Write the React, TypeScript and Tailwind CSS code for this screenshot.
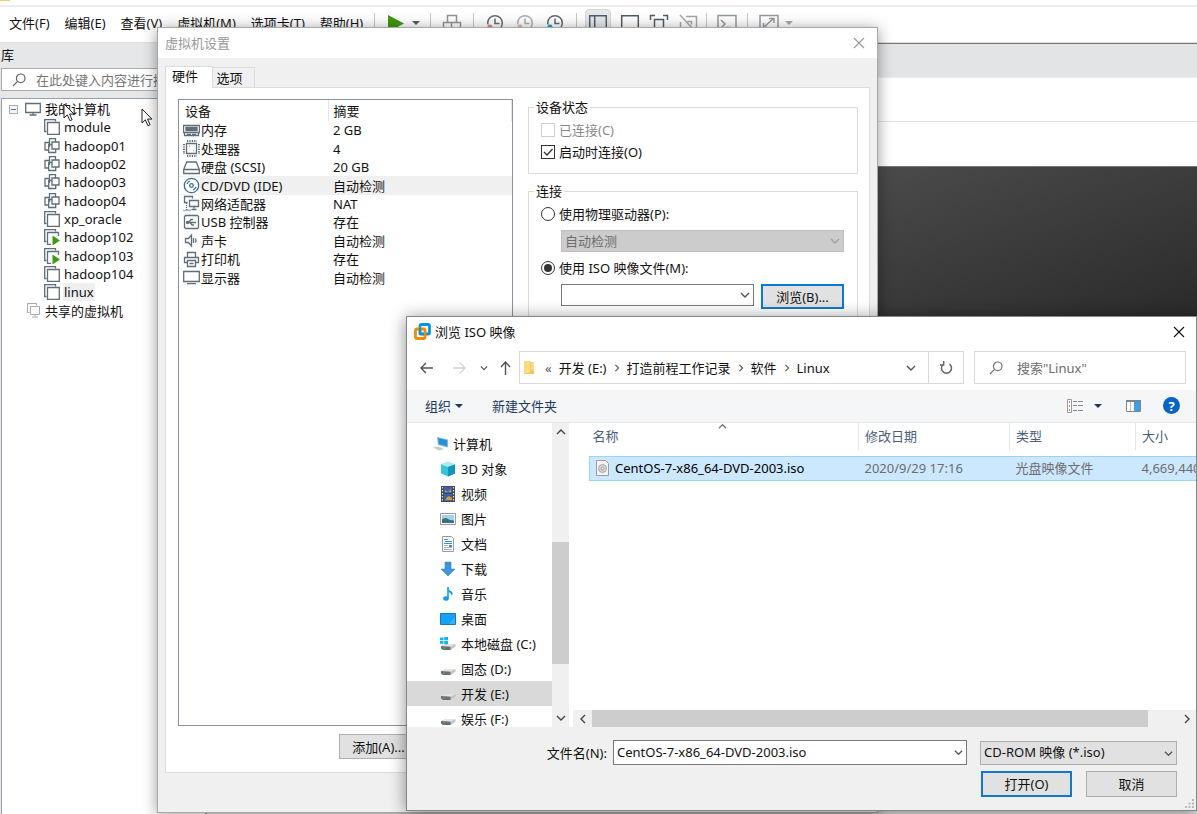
import { useState } from 'react';
import type { ReactNode } from 'react';

const menus = ['文件(F)', '编辑(E)', '查看(V)', '虚拟机(M)', '选项卡(T)', '帮助(H)'];

const machines = [
  { name: 'module', icon: 'single' },
  { name: 'hadoop01', icon: 'clone' },
  { name: 'hadoop02', icon: 'clone' },
  { name: 'hadoop03', icon: 'clone' },
  { name: 'hadoop04', icon: 'clone' },
  { name: 'xp_oracle', icon: 'single' },
  { name: 'hadoop102', icon: 'running' },
  { name: 'hadoop103', icon: 'running' },
  { name: 'hadoop104', icon: 'single' },
  { name: 'linux', icon: 'single' },
];

const devices = [
  { name: '内存', summary: '2 GB', icon: 'memory' },
  { name: '处理器', summary: '4', icon: 'cpu' },
  { name: '硬盘 (SCSI)', summary: '20 GB', icon: 'disk' },
  { name: 'CD/DVD (IDE)', summary: '自动检测', icon: 'cd' },
  { name: '网络适配器', summary: 'NAT', icon: 'network' },
  { name: 'USB 控制器', summary: '存在', icon: 'usb' },
  { name: '声卡', summary: '自动检测', icon: 'sound' },
  { name: '打印机', summary: '存在', icon: 'printer' },
  { name: '显示器', summary: '自动检测', icon: 'display' },
];

const places = [
  { name: '3D 对象', icon: 'cube' },
  { name: '视频', icon: 'video' },
  { name: '图片', icon: 'picture' },
  { name: '文档', icon: 'document' },
  { name: '下载', icon: 'download' },
  { name: '音乐', icon: 'music' },
  { name: '桌面', icon: 'desktop' },
  { name: '本地磁盘 (C:)', icon: 'system' },
  { name: '固态 (D:)', icon: 'drive' },
  { name: '开发 (E:)', icon: 'drive' },
  { name: '娱乐 (F:)', icon: 'drive' },
];

const crumbs = ['开发 (E:)', '打造前程工作记录', '软件', 'Linux'];

function Chevron({ dir = 'down', size = 10, className = '' }: { dir?: string; size?: number; className?: string }) {
  const d: Record<string, string> = {
    down: 'M1 3l4 4 4-4',
    up: 'M1 7l4-4 4 4',
    left: 'M7 1L3 5l4 4',
    right: 'M3 1l4 4-4 4',
  };
  return (
    <svg width={size} height={size} viewBox="0 0 10 10" fill="none" stroke="currentColor" strokeWidth="1.4" className={`shrink-0 ${className}`}>
      <path d={d[dir]} />
    </svg>
  );
}

function Caret({ className = '' }: { className?: string }) {
  return (
    <svg width="8" height="4" viewBox="0 0 8 4" className={`shrink-0 ${className}`} fill="currentColor">
      <path d="M0 0h8L4 4z" />
    </svg>
  );
}

function Lens({ className = '' }: { className?: string }) {
  return (
    <svg width="14" height="14" viewBox="0 0 14 14" fill="none" stroke="currentColor" strokeWidth="1.2" className={`shrink-0 ${className}`}>
      <circle cx="8.7" cy="5.3" r="4.3" />
      <path d="M5.6 8.4L1 13" />
    </svg>
  );
}

function Cross({ className = '' }: { className?: string }) {
  return (
    <svg width="12" height="12" viewBox="0 0 12 12" fill="none" stroke="currentColor" strokeWidth="1.1" className={className}>
      <path d="M1 1l10 10M11 1L1 11" />
    </svg>
  );
}

function Cursor({ className = '' }: { className?: string }) {
  return (
    <svg width="13" height="19" viewBox="0 0 13 19" className={className}>
      <path d="M1 1v14l3.3-3.1 2.6 5.8 2.2-1-2.5-5.6H11z" fill="#fff" stroke="#222" />
    </svg>
  );
}

function MachineIcon({ type }: { type: string }) {
  return (
    <svg width="16" height="16" viewBox="0 0 16 16" fill="none" stroke="#5f6e78" strokeWidth="1.3" className="shrink-0">
      {type === 'clone' ? (
        <>
          <path d="M5.5 4.5H1v7.500h3.500" />
          <path d="M5.5 9V.7h6V4" />
          <path d="M8 6.500H4.700v8h7V11" />
          <path d="M8 4h7v7H8z" />
        </>
      ) : (
        <>
          <path d="M2.500 12.500H.7V.7h10.800v1.800" />
          {type === 'single' ? <path d="M3.500 3.500h11.800v11.800H3.500z" /> : <path d="M7 15.300H3.500V3.500h11V7" />}
          {type === 'running' && <path d="M8.500 6.500l7.500 5-7.500 5z" fill="#3f9c12" stroke="none" />}
        </>
      )}
    </svg>
  );
}

const deviceDrawings: Record<string, ReactNode> = {
  memory: (
    <>
      <path d="M.5 3.500h16v7H.5zM1.500 10.500v3h14v-3" />
      <path d="M3 5.500h3v3H3zM7 5.500h3v3H7zM11 5.500h3v3h-3z" fill="#5f6e78" />
      <path d="M4 12.500h4M9 12.500h4" />
    </>
  ),
  cpu: (
    <>
      <path d="M3.500 3.500h10v10h-10z" />
      <path d="M6 6h.5M10.500 10.500h.5" strokeWidth="1.500" />
      <path d="M4 1h10M4 16h10M1 4v10M16 4v10" strokeDasharray="1.200 1.200" strokeWidth="2" />
    </>
  ),
  disk: <path d="M.7 10.500l3-7.500h9.600l3 7.500v4H.7zM.7 10.500h15.600" />,
  cd: (
    <>
      <circle cx="8.500" cy="8.500" r="7.200" stroke="#3d6f96" />
      <circle cx="8.500" cy="8.500" r="1.800" stroke="#3d6f96" />
      <path d="M4 7A5 5 0 0 1 7 4M13 10A5 5 0 0 1 10 13" stroke="#3d6f96" />
    </>
  ),
  network: (
    <>
      <path d="M4.500 7.500h-3v-6h8v2M6.500 5.500h9v6h-9zM11 11.500v2M8.500 14.500h5" />
      <path d="M3.500 8v7H8M.5 15.500h8" strokeDasharray="1 1" />
    </>
  ),
  usb: (
    <>
      <path d="M2.500 1.500h12l1 1v11l-1 1h-12l-1-1v-11z" />
      <path d="M4 8.500h9M6 8l2-2.500h2M7 8.500l2 2.500h2" />
      <circle cx="4.500" cy="8.500" r="1" fill="#5f6e78" />
    </>
  ),
  sound: <path d="M2.500 6.500h3l3-3.500v11l-3-3.500h-3zM10.500 6v5M12.500 6.500q1 2 0 4" />,
  printer: (
    <>
      <path d="M4.500 6.500v-5h8v5M4.500 11.500h-3v-5h14v5h-3" />
      <path d="M4.500 9.500h8v6h-8zM6.500 12.500h4" />
    </>
  ),
  display: <path d="M.7 2.500h15.600v10H.7zM4 14.700h9" />,
};

function DeviceIcon({ type }: { type: string }) {
  return (
    <svg width="17" height="17" viewBox="0 0 17 17" fill="none" stroke="#5f6e78" strokeWidth="1.3" className="shrink-0">
      {deviceDrawings[type]}
    </svg>
  );
}

const driveBody = (
  <>
    <path d="M1 10l5-2h9.500v2.500L10.500 14H3l-2-1.500z" fill="#c3c3c3" />
    <path d="M1 10l5-2h9.500l-5 2.800z" fill="#e4e4e4" />
    <path d="M1 10l9.500.8V14H3l-2-1.500z" fill="#6b706f" />
    <path d="M3 12h2" stroke="#46c34c" />
  </>
);

const placeDrawings: Record<string, ReactNode> = {
  computer: (
    <>
      <path d="M4 1l11 2.500v8L5 9z" fill="#8fb9d4" />
      <path d="M5 2l9 2.200v6L6 8.300z" fill="#2193dc" />
      <path d="M0 11.500l5-1 6 2.500-5 1.500z" fill="#c8ccd0" />
    </>
  ),
  cube: (
    <>
      <path d="M8 1l7 2.500v9L8 15.500l-7-3v-9z" fill="#37c3dc" />
      <path d="M8 1l7 2.500L8 6 1 3.500z" fill="#a5ebf3" />
      <path d="M8 6l7-2.500v9L8 15.500z" fill="#1496b8" />
    </>
  ),
  video: (
    <>
      <path d="M1 0h14v16H1z" fill="#46474a" />
      <path d="M4 1h8v6H4z" fill="#3764b8" />
      <path d="M4 8h8v7H4z" fill="#3b62ac" />
      <path d="M5 4l3 2 3-3v3H5zM6 12l3-2 3 2v2H6z" fill="#d39b3a" />
      <path d="M2.500 1v15M13.500 1v15" stroke="#ddd" strokeDasharray="1.500 1.500" strokeWidth="1.200" />
    </>
  ),
  picture: (
    <>
      <path d="M.5 2.500h15v11H.5z" fill="#fff" stroke="#9a9a9a" />
      <path d="M2 4h12v8H2z" fill="#9fd2f4" />
      <path d="M2 8l4-1 4 2 4 .5V12H2z" fill="#3d7162" />
      <path d="M2 10.500h12V12H2z" fill="#386da0" />
    </>
  ),
  document: (
    <>
      <path d="M2.500.5h9l2 2v13h-11z" fill="#fff" stroke="#9b9b9b" />
      <path d="M4 3.500h4M5 5.500h7M4 7.500h8" stroke="#3b94d8" />
      <path d="M4 9.500h4M4 11.500h8M4 13.500h8" stroke="#9bb4c8" />
      <path d="M9 9h3v2H9z" fill="#4c85aa" />
    </>
  ),
  download: <path d="M5 1h6v7h4l-7 7-7-7h4z" fill="#3e95dd" stroke="#2a79bd" strokeWidth=".5" />,
  music: (
    <>
      <path d="M8 1v11" stroke="#109bf0" strokeWidth="1.600" />
      <path d="M8.500 1q0 3 3 4.500 2 1.500.3 4.500 0-2.500-3.300-4z" fill="#109bf0" />
      <ellipse cx="6" cy="12.500" rx="2.800" ry="2.200" fill="#109bf0" />
    </>
  ),
  desktop: (
    <>
      <path d="M.5 2.500h15v11H.5z" fill="#16a0f8" stroke="#2175b4" />
      <path d="M9 13l6-7v7z" fill="#3bb2fc" />
    </>
  ),
  system: (
    <>
      {driveBody}
      <path d="M0 1.500h3.500v2.700H0zM4.200 1H8v3.200H4.200zM0 5h3.500v2.700H0zM4.200 5H8v3.200H4.200z" fill="#12b5ee" />
    </>
  ),
  drive: driveBody,
};

function PlaceIcon({ type }: { type: string }) {
  return (
    <svg width="16" height="16" viewBox="0 0 16 16" fill="none" className="shrink-0">
      {placeDrawings[type]}
    </svg>
  );
}

function Divider() {
  return <div className="h-5 w-px bg-[#c4c8cb]" />;
}

function ToolButton({ label, active, children }: { label: string; active?: boolean; children: ReactNode }) {
  return (
    <button
      aria-label={label}
      className={`flex h-7 items-center justify-center ${active ? 'w-[26px] rounded border border-[#d4d8da] bg-[#e4e8ea]' : ''}`}
    >
      <svg width={active ? 18 : 20} height="18" viewBox={active ? '1 0 18 18' : '0 0 20 18'} fill="none" stroke="#4f5d69" strokeWidth="1.500">
        {children}
      </svg>
    </button>
  );
}

function Clock({ label, color, dot }: { label: string; color: string; dot: string }) {
  return (
    <ToolButton label={label}>
      <g stroke={color}>
        <circle cx="10" cy="9" r="7.300" />
        <path d="M10 4.500v5h4.500" />
      </g>
      <path d="M2 10.500h5v5H2z" fill="#fff" stroke="none" />
      <circle cx="5" cy="13" r="2.500" fill={dot} stroke="none" />
    </ToolButton>
  );
}

function MenuBar() {
  return (
    <div className="flex h-[37px] items-center border-t-2 border-[#ededed] pb-[3px] pl-[9px]">
      <nav className="flex gap-[15px] pr-[11px]">
        {menus.map((menu) => (
          <button key={menu} className="whitespace-nowrap">
            {menu}
          </button>
        ))}
      </nav>
      <Divider />
      <div className="flex items-center gap-[7px] px-[10px]">
        <ToolButton label="启动">
          <path d="M3 1l16 8.500L3 18z" fill="#429812" stroke="none" />
        </ToolButton>
        <Caret className="text-[#4f5d69]" />
      </div>
      <Divider />
      <div className="flex px-[11px]">
        <ToolButton label="发送">
          <g stroke="#8d959b">
            <path d="M5.500 1.500h9v7h-9zM1.500 8.500h8v6h-8zM9.500 8.500h9v6h-9z" />
          </g>
        </ToolButton>
      </div>
      <Divider />
      <div className="flex gap-[10px] px-[11px]">
        <Clock label="拍摄快照" color="#5f6c76" dot="#e8896d" />
        <Clock label="恢复快照" color="#a9afb3" dot="#f0b49c" />
        <Clock label="管理快照" color="#5f6c76" dot="#18a2c0" />
      </div>
      <Divider />
      <div className="flex gap-[9px] px-2">
        <ToolButton label="显示库" active>
          <path d="M1.700 1.700h16.600v16H1.700zM6.700 2v16" />
        </ToolButton>
        <ToolButton label="缩略图栏">
          <path d="M1.700 1.700h16.600v12H1.700zM2 13.700h16" />
        </ToolButton>
        <ToolButton label="全屏">
          <path d="M1.500 6V1.500H6M14 1.500h4.500V6M5.500 5.500h9v12h-9zM1.500 14v3" />
        </ToolButton>
        <ToolButton label="Unity">
          <g stroke="#a2a8ac">
            <path d="M8 2.500h10.500v13H14M2.500 8v7.500H12M2 1l13 14M9.500 7.500h4v3" />
          </g>
        </ToolButton>
      </div>
      <Divider />
      <div className="flex px-[10px]">
        <ToolButton label="控制台">
          <g stroke="#9299a0">
            <path d="M1 1.500h18v15H1zM4 6l4 4-4 4M9 13.500h5" />
          </g>
        </ToolButton>
      </div>
      <Divider />
      <div className="flex items-center gap-[6px] px-[11px]">
        <ToolButton label="自由拉伸">
          <g stroke="#9299a0">
            <path d="M1 1.500h18v15H1zM5 13l9-8M10 4.500h5V9M4.500 9v4.500H9" />
          </g>
        </ToolButton>
        <Caret className="text-[#a2a8ac]" />
      </div>
    </div>
  );
}

function Library() {
  return (
    <aside className="flex w-[206px] shrink-0 flex-col bg-[#e6e7e9] pl-px">
      <h2 className="h-[25px] leading-6">库</h2>
      <label className="flex h-[23px] items-center border border-[#a9adb3] bg-white pl-[10px]">
        <Lens className="text-[#666]" />
        <input
          aria-label="搜索"
          placeholder="在此处键入内容进行搜索"
          className="ml-[10px] w-full bg-transparent outline-none placeholder:text-[#767676]"
        />
      </label>
      <div className="relative mt-[7px] flex-1 border border-b-0 border-[#9a9fa8] bg-white">
        <ul className="grid h-[221px] auto-rows-fr pt-px">
          <li className="flex items-center pl-[7px]">
            <span className="flex h-[9px] w-[9px] items-center justify-center border border-[#a9adb3] bg-[#f4f5f7]">
              <span className="h-px w-[5px] bg-[#5b74a6]" />
            </span>
            <svg width="16" height="14" viewBox="0 0 16 14" fill="none" stroke="#5f6e78" strokeWidth="1.3" className="ml-[7px]">
              <path d="M.7 1.500h14.600v9H.7zM8 10.500v2M4.500 13h7" />
            </svg>
            <span className="ml-1">我的计算机</span>
          </li>
          {machines.map((machine) => (
            <li key={machine.name} className="flex items-center pl-[42px]">
              <MachineIcon type={machine.icon} />
              <span className={`ml-[3px] px-px leading-[18px] ${machine.name === 'linux' ? 'bg-[#efefef]' : ''}`}>
                {machine.name}
              </span>
            </li>
          ))}
          <li className="flex items-center pl-[25px]">
            <svg width="13" height="15" viewBox="0 0 13 15" fill="none" stroke="#a5adb2">
              <path d="M2.500 9.500H.5V.5h9v2M3.500 3.500h9v8h-9zM8 11.500v2M5 14h6" />
            </svg>
            <span className="ml-[5px]">共享的虚拟机</span>
          </li>
        </ul>
        <Cursor className="absolute top-[4px] left-[61px]" />
        <Cursor className="absolute top-[9px] left-[139px]" />
      </div>
    </aside>
  );
}

function Group({ title, children }: { title: string; children: ReactNode }) {
  return (
    <fieldset className="border border-[#dcdcdc] px-3">
      <legend className="-ml-[7px] px-[2px] leading-5">{title}</legend>
      {children}
    </fieldset>
  );
}

function DeviceStatus() {
  const [connectOnStart, setConnectOnStart] = useState(true);

  return (
    <Group title="设备状态">
      <div className="pt-[2px] pb-[10px]">
        <label className="flex h-[22px] items-center gap-1 text-[#8a8a8a]">
          <input type="checkbox" disabled className="h-[14px] w-[14px] appearance-none border border-[#cfcfcf] bg-white" />
          已连接(C)
        </label>
        <label className="flex h-[22px] items-center gap-1">
          <span className="grid">
            <input
              type="checkbox"
              checked={connectOnStart}
              onChange={(e) => setConnectOnStart(e.target.checked)}
              className="col-start-1 row-start-1 h-[14px] w-[14px] appearance-none border border-[#333] bg-white"
            />
            {connectOnStart && (
              <svg width="14" height="14" viewBox="0 0 14 14" fill="none" stroke="#333" strokeWidth="1.300" className="pointer-events-none col-start-1 row-start-1">
                <path d="M3 7l3 3 5.500-6" />
              </svg>
            )}
          </span>
          启动时连接(O)
        </label>
      </div>
    </Group>
  );
}

function Connection() {
  const [source, setSource] = useState('iso');

  const radio = (value: string, text: string) => (
    <label className="flex h-[22px] items-center gap-1">
      <span className="flex h-[14px] w-[14px] items-center justify-center rounded-full border border-[#333] bg-white">
        <input
          type="radio"
          name="source"
          checked={source === value}
          onChange={() => setSource(value)}
          className="h-2 w-2 appearance-none rounded-full checked:bg-[#333]"
        />
      </span>
      {text}
    </label>
  );

  return (
    <Group title="连接">
      <div className="flex min-h-[400px] flex-col gap-[5px] pt-[2px]">
        {radio('physical', '使用物理驱动器(P):')}
        <div className="relative mr-px ml-5">
          <select
            aria-label="物理驱动器"
            disabled
            className="block h-[22px] w-full appearance-none border border-[#bfbfbf] bg-[#ccc] px-[3px] text-[#6d6d6d] opacity-100"
          >
            <option>自动检测</option>
          </select>
          <Chevron className="absolute top-[6px] right-1 text-[#a0a0a0]" />
        </div>
        {radio('iso', '使用 ISO 映像文件(M):')}
        <div className="mr-px ml-5 flex items-start gap-[7px]">
          <div className="relative flex-1">
            <input aria-label="ISO 映像文件" className="block h-[22px] w-full border border-[#7a7a7a] bg-white px-1 outline-none" />
            <Chevron className="absolute top-[6px] right-1 text-[#555]" />
          </div>
          <button className="h-[25px] w-[83px] border-2 border-[#0f78d4] bg-[#e1e1e1]">浏览(B)...</button>
        </div>
      </div>
    </Group>
  );
}

function SettingsDialog() {
  return (
    <section className="absolute top-[27px] bottom-px left-[157px] flex w-[721px] flex-col border border-[#a8a8a8] bg-[#f0f0f0] shadow-[0_2px_14px_rgba(0,0,0,0.4)]">
      <header className="flex h-[30px] shrink-0 items-center justify-between bg-white pr-3 pl-[7px] text-[#999]">
        <h1>虚拟机设置</h1>
        <button aria-label="关闭">
          <Cross />
        </button>
      </header>
      <div className="flex items-end px-[7px] pt-2" role="tablist">
        <button role="tab" aria-selected="true" className="z-10 -mb-px h-[22px] w-12 border border-b-0 border-[#dcdcdc] bg-white pr-2 pb-[3px]">
          硬件
        </button>
        <button role="tab" aria-selected="false" className="h-5 w-[42px] border border-b-0 border-l-0 border-[#dcdcdc] pr-2">
          选项
        </button>
      </div>
      <div className="mx-[7px] mb-[39px] flex min-h-0 flex-1 border border-[#dcdcdc] bg-white pr-[11px] pl-3">
        <div className="flex w-[335px] flex-col pt-[11px] pb-[13px]">
          <div className="min-h-0 flex-1 border border-[#8b929b] bg-white">
            <table className="h-[187px] w-full border-collapse text-left">
              <thead>
                <tr className="h-[21px]">
                  <th className="w-[149px] border-r border-[#e2e2e2] py-0 pl-[6px] font-normal">设备</th>
                  <th className="border-r border-[#e2e2e2] py-0 pl-[5px] font-normal">摘要</th>
                </tr>
              </thead>
              <tbody className="leading-[18px]">
                {devices.map((device) => (
                  <tr key={device.name} className={device.icon === 'cd' ? 'bg-[#f0f0f0]' : ''}>
                    <td className="p-0">
                      <div className="flex items-center">
                        <span className="bg-white pl-1">
                          <DeviceIcon type={device.icon} />
                        </span>
                        <span className="ml-px whitespace-nowrap">{device.name}</span>
                      </div>
                    </td>
                    <td className="p-0 pl-[5px]">{device.summary}</td>
                  </tr>
                ))}
              </tbody>
            </table>
          </div>
          <button className="mt-2 mr-[83px] h-[25px] w-[91px] self-end border border-[#b0b0b0] bg-[#e1e1e1] pr-3">添加(A)...</button>
        </div>
        <div className="ml-[15px] flex min-w-0 flex-1 flex-col gap-[7px] pt-[9px]">
          <DeviceStatus />
          <Connection />
        </div>
      </div>
    </section>
  );
}

function AddressRow() {
  return (
    <div className="flex h-11 items-start pt-[5px] pr-[10px] pl-[13px]">
      <div className="flex h-[34px] items-center text-[#555]">
        <button aria-label="后退">
          <svg width="13" height="12" viewBox="0 0 13 12" fill="none" stroke="currentColor" strokeWidth="1.400">
            <path d="M13 6H1M6 1L1 6l5 5" />
          </svg>
        </button>
        <button aria-label="前进" className="ml-5 text-[#d3d3d3]">
          <svg width="13" height="12" viewBox="0 0 13 12" fill="none" stroke="currentColor" strokeWidth="1.400">
            <path d="M0 6h12M7 1l5 5-5 5" />
          </svg>
        </button>
        <button aria-label="最近浏览的位置" className="ml-[14px]">
          <Chevron size={8} />
        </button>
        <button aria-label="上移" className="ml-3">
          <svg width="11" height="14" viewBox="0 0 11 14" fill="none" stroke="currentColor" strokeWidth="1.400">
            <path d="M5.500 14V1M1 6l4.500-5L10 6" />
          </svg>
        </button>
      </div>
      <div className="ml-2 flex h-[33px] min-w-0 flex-1 items-center border border-[#d9d9d9]">
        <svg width="11" height="15" viewBox="0 0 11 15" className="ml-1">
          <path d="M0 1h6l1 1h3v12H0z" fill="#fbdc84" />
          <path d="M6 2h1v7l3 2v3H0l6-2z" fill="#f1c75c" />
        </svg>
        <span className="ml-[10px] text-[#555]">«</span>
        <ol className="ml-[7px] flex">
          {crumbs.map((crumb, index) => (
            <li key={crumb} className="flex items-center">
              {index > 0 && <Chevron dir="right" size={8} className="mx-[6px] text-[#555]" />}
              <button className="whitespace-nowrap">{crumb}</button>
            </li>
          ))}
        </ol>
        <button aria-label="上一个位置" className="mr-3 ml-auto text-[#555]">
          <Chevron />
        </button>
        <button aria-label="刷新" className="flex h-full w-[35px] items-center justify-center border-l border-[#d9d9d9] text-[#666]">
          <svg width="13" height="14" viewBox="0 0 13 14" fill="none" stroke="currentColor" strokeWidth="1.500">
            <path d="M3.500 3.200a5 5 0 1 0 6 0M3.700 0v4H0" />
          </svg>
        </button>
      </div>
      <label className="ml-[10px] flex h-[33px] w-[212px] items-center border border-[#d9d9d9] pl-[14px]">
        <Lens className="text-[#777]" />
        <input
          type="search"
          aria-label="搜索"
          placeholder={'搜索"Linux"'}
          className="ml-[14px] w-full min-w-0 outline-none placeholder:text-[#6d6d6d]"
        />
      </label>
    </div>
  );
}

function CommandBar() {
  return (
    <div className="flex h-[33px] shrink-0 items-center border-b border-[#e6e7e9] bg-[#f5f6f7] pr-4 pb-px pl-[18px] text-[#1e395b]">
      <button className="flex items-center gap-1">
        组织
        <Caret />
      </button>
      <button className="ml-[29px]">新建文件夹</button>
      <button aria-label="更改视图" className="ml-auto flex items-center gap-[11px]">
        <svg width="16" height="14" viewBox="0 0 16 14" fill="none">
          <path d="M.5.5h4v13h-4z" fill="#fff" stroke="#999" />
          <path d="M2 3h1" stroke="#3b84c4" strokeWidth="1.500" />
          <path d="M2 7h1" stroke="#c0502a" strokeWidth="1.500" />
          <path d="M2 11h1" stroke="#c0502a" strokeWidth="1.500" />
          <path d="M6 2.500h4M11 2.500h5M6 6.500h4M11 6.500h5M6 11.500h4M11 11.500h5" stroke="#888" />
        </svg>
        <Caret />
      </button>
      <button aria-label="预览窗格" className="ml-6">
        <svg width="15" height="12" viewBox="0 0 15 12" fill="none">
          <path d="M.5.5h14v11H.5z" fill="#fff" stroke="#7c868e" />
          <path d="M0 1h15" stroke="#7c868e" strokeWidth="2" />
          <path d="M8 2h6v9H8z" fill="#3fa0ea" />
          <path d="M4.500 2v9" stroke="#bbb" />
        </svg>
      </button>
      <button
        aria-label="获取帮助"
        className="ml-[22px] flex h-[17px] w-[17px] items-center justify-center rounded-full bg-[#0564c4] text-[13px] font-bold text-white"
      >
        ?
      </button>
    </div>
  );
}

function NavPane() {
  return (
    <div className="flex w-[162px] shrink-0">
      <ul className="flex h-[304px] min-w-0 flex-1 flex-col overflow-hidden pt-2">
        <li className="flex h-[25px] shrink-0 items-center gap-1 pl-[26px]">
          <PlaceIcon type="computer" />
          计算机
        </li>
        {places.map((place) => (
          <li
            key={place.name}
            className={`flex h-[25px] shrink-0 items-center gap-[5px] pl-[33px] whitespace-nowrap ${
              place.name === '开发 (E:)' ? 'bg-[#d9d9d9]' : ''
            }`}
          >
            <PlaceIcon type={place.icon} />
            {place.name}
          </li>
        ))}
      </ul>
      <div className="flex w-[17px] flex-col items-center bg-[#f0f0f0] py-1 text-[#444]">
        <Chevron dir="up" />
        <div className="mt-[105px] h-[122px] w-full bg-[#cdcdcd]" />
        <Chevron className="mt-auto" />
      </div>
    </div>
  );
}

function FileList() {
  return (
    <div className="flex min-w-0 flex-1 flex-col overflow-hidden pl-1">
      <div className="flex-1 pl-4">
        <table className="w-full table-fixed border-collapse text-left text-[#4c607a]">
          <thead>
            <tr className="h-[27px]">
              <th className="relative w-[269px] border-r border-[#e5e5e5] pt-0 pb-px pl-[3px] font-normal">
                名称
                <Chevron dir="up" size={9} className="absolute -top-px left-[128px] text-[#777]" />
              </th>
              <th className="w-[151px] border-r border-[#e5e5e5] pt-0 pb-px pl-[6px] font-normal">修改日期</th>
              <th className="w-[126px] border-r border-[#e5e5e5] pt-0 pb-px pl-[6px] font-normal">类型</th>
              <th className="pt-0 pb-px pl-[6px] font-normal">大小</th>
            </tr>
          </thead>
          <tbody>
            <tr className="h-[6px]" />
            <tr className="h-6 border border-r-0 border-[#99d1ff] bg-[#cce8ff] whitespace-nowrap text-[#6d6d6d]">
              <td className="p-0 pl-[6px] text-black">
                <div className="flex items-center gap-[6px]">
                  <svg width="13" height="16" viewBox="0 0 13 16" fill="none">
                    <path d="M.5.5h9l3 3v12H.5z" fill="#f4f4f4" stroke="#9c9c9c" />
                    <circle cx="6.500" cy="8.500" r="4" fill="#d4d4d4" stroke="#aaa" />
                    <circle cx="6.500" cy="8.500" r="1.300" fill="#fff" stroke="#999" />
                  </svg>
                  CentOS-7-x86_64-DVD-2003.iso
                </div>
              </td>
              <td className="p-0 pl-[6px]">2020/9/29 17:16</td>
              <td className="p-0 pl-[6px]">光盘映像文件</td>
              <td className="overflow-hidden p-0 pl-[6px]">4,669,440</td>
            </tr>
          </tbody>
        </table>
      </div>
      <div className="flex h-[17px] items-center bg-[#f0f0f0] pr-1 pl-[5px] text-[#444]">
        <Chevron dir="left" />
        <div className="ml-1 h-full flex-1 bg-[#cdcdcd]" />
        <Chevron dir="right" className="ml-[34px]" />
      </div>
    </div>
  );
}

function BrowseDialog() {
  const [fileName, setFileName] = useState('CentOS-7-x86_64-DVD-2003.iso');

  return (
    <section className="absolute top-[316px] right-0 bottom-[3px] left-[406px] flex flex-col border border-[#858585] bg-white shadow-[0_2px_16px_rgba(0,0,0,0.45)]">
      <header className="flex h-[29px] shrink-0 items-center pr-[11px] pl-[7px]">
        <svg width="17" height="17" viewBox="0 0 17 17" fill="none">
          <rect x="6" y="1.500" width="9.500" height="9.500" rx="1.500" stroke="#0b94d8" strokeWidth="2.800" />
          <rect x="1.500" y="6" width="9.500" height="9.500" rx="1.500" stroke="#f38b00" strokeWidth="2.800" />
          <path d="M6 5v6h4" stroke="#0b94d8" strokeWidth="2.400" />
        </svg>
        <h1 className="ml-1">浏览 ISO 映像</h1>
        <button aria-label="关闭" className="ml-auto">
          <Cross />
        </button>
      </header>
      <AddressRow />
      <CommandBar />
      <div className="flex min-h-0 flex-1">
        <NavPane />
        <FileList />
      </div>
      <footer className="flex h-[83px] shrink-0 flex-col gap-[6px] bg-[#f0f0f0] pt-[13px] pr-[19px]">
        <div className="flex items-center">
          <label htmlFor="file-name" className="w-[200px] text-right">
            文件名(N):
          </label>
          <div className="relative ml-[6px] flex-1">
            <input
              id="file-name"
              value={fileName}
              onChange={(e) => setFileName(e.target.value)}
              className="block h-[25px] w-full border border-[#7a7a7a] bg-white px-[3px] pb-px outline-none"
            />
            <Chevron size={9} className="absolute top-2 right-1 text-[#555]" />
          </div>
          <div className="relative ml-[13px] w-[197px]">
            <select aria-label="文件类型" className="block h-6 w-full appearance-none border border-[#adadad] bg-[#e1e1e1] px-[3px] pb-px">
              <option>CD-ROM 映像 (*.iso)</option>
            </select>
            <Chevron size={9} className="absolute top-2 right-1 text-[#555]" />
          </div>
        </div>
        <div className="flex justify-end gap-[14px]">
          <button className="h-[26px] w-[91px] border-2 border-[#0f78d4] bg-[#e1e1e1]">打开(O)</button>
          <button className="h-[26px] w-[91px] border border-[#adadad] bg-[#e1e1e1]">取消</button>
        </div>
      </footer>
      <svg width="10" height="10" viewBox="0 0 10 10" fill="#b9b9b9" className="absolute right-px bottom-px">
        <path d="M7 0h2v2H7zM7 3.500h2v2H7zM3.500 3.500h2v2h-2zM7 7h2v2H7zM3.500 7h2v2h-2zM0 7h2v2H0z" />
      </svg>
    </section>
  );
}

export default function App() {
  return (
    <div className="relative flex min-h-screen flex-col overflow-hidden bg-white font-['Noto_Sans','Noto_Sans_CJK_SC',sans-serif] text-[13px] leading-[18px] text-[#111]">
      <div className="h-[5px]">
        <div className="h-px w-[10px] bg-[#fbc77d]" />
      </div>
      <MenuBar />
      <div className="flex flex-1 border-t border-[#dcdee0]">
        <Library />
        <main className="flex flex-1 flex-col border-l border-[#888]">
          <div className="h-[35px] border-t border-b border-t-[#777] border-b-[#eee] bg-[#e2e4e6]" />
          <div className="h-11 border-b border-[#e2e2e2]" />
          <div className="h-11" />
          <div className="flex-1 border-t border-[#777] bg-[linear-gradient(160deg,#4d4d4d_0%,#4a4a4a_25%,#202020_60%)]" />
          <div className="h-3 bg-[#e2e2e2]" />
        </main>
      </div>
      <SettingsDialog />
      <BrowseDialog />
    </div>
  );
}
